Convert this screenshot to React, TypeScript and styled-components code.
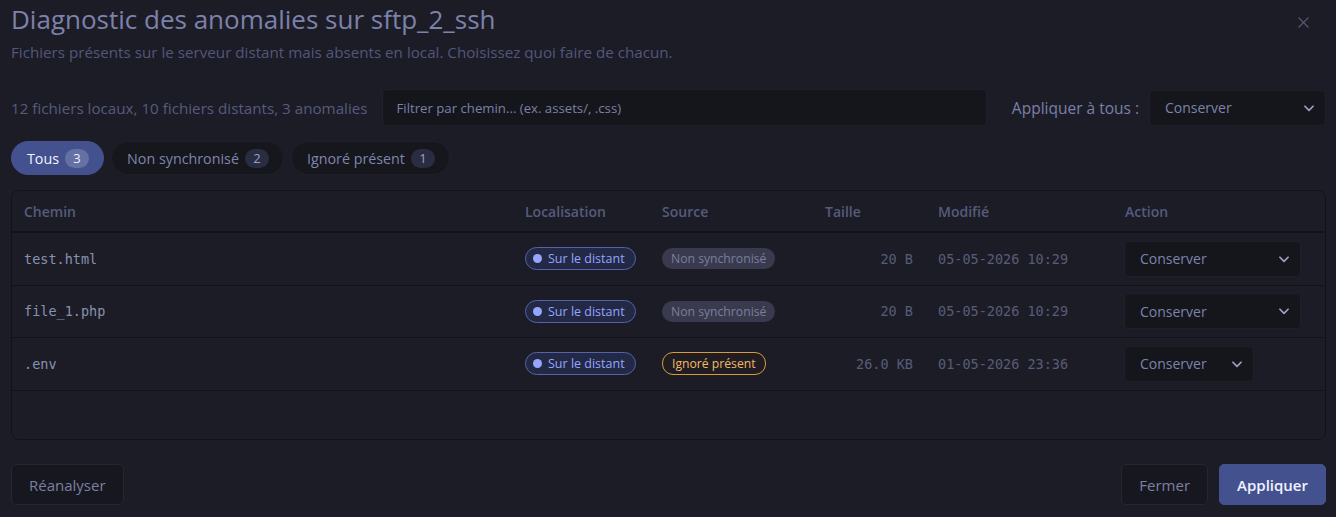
import React from "react";
import styled, { createGlobalStyle, css } from "styled-components";

const Global = createGlobalStyle`
  html, body { margin: 0; padding: 0; background: #1c1c26; }
  body { font-family: "Open Sans", "Noto Sans", sans-serif; color: #8a90b8; }
  * { box-sizing: border-box; }
`;

const Page = styled.div`
  width: 1336px;
  height: 517px;
  background: #1c1c26;
  padding: 0 10px 0 11px;
  display: flex;
  flex-direction: column;
  overflow: hidden;
`;

const Header = styled.div`
  display: flex;
  justify-content: space-between;
  align-items: flex-start;
  padding-top: 3px;
`;

const Title = styled.h1`
  margin: 0;
  font-size: 26px;
  font-weight: 500;
  line-height: 32px;
  color: #7c82ab;
`;

const Close = styled.button`
  background: none;
  border: none;
  padding: 0;
  margin: 13px 17px 0 0;
  width: 12px;
  height: 12px;
  display: flex;
  align-items: center;
  justify-content: center;
  cursor: pointer;
`;

const Subtitle = styled.p`
  margin: 7px 0 0;
  font-size: 15.2px;
  line-height: 20px;
  color: #52577a;
`;

const Toolbar = styled.div`
  display: flex;
  align-items: center;
  gap: 14px;
  margin-top: 27px;
  height: 37px;
`;

const Stats = styled.span`
  font-size: 15.2px;
  color: #565b7c;
  white-space: nowrap;
`;

const FilterInput = styled.div`
  flex: 1;
  height: 37px;
  background: #15151c;
  border: 1px solid #20202a;
  border-radius: 5px;
  display: flex;
  align-items: center;
  padding: 0 14px;
  font-size: 13.2px;
  color: #7a80a6;
  margin-right: 11px;
`;

const Label = styled.span`
  font-size: 15.5px;
  color: #7a80a6;
  white-space: nowrap;
  margin-right: -4px;
`;

const Select = styled.div<{ $w: number }>`
  width: ${(p) => p.$w}px;
  height: 36px;
  background: #15151c;
  border: 1px solid #20202a;
  border-radius: 5px;
  display: flex;
  align-items: center;
  justify-content: space-between;
  padding: 0 9px 0 15px;
  font-size: 14px;
  color: #7d83ab;
`;

const Tabs = styled.div`
  display: flex;
  gap: 7px;
  margin-top: 15px;
`;

const Tab = styled.div<{ $active?: boolean }>`
  height: 34px;
  border-radius: 17px;
  display: flex;
  align-items: center;
  gap: 6px;
  padding: 0 14px 0 15px;
  font-size: 14.3px;
  ${(p) =>
    p.$active
      ? css`
          background: #44518f;
          color: #f2f3ff;
          border: 1px solid #44518f;
        `
      : css`
          background: #16161d;
          color: #7f85ad;
          border: 1px solid #20202a;
        `}
`;

const Count = styled.span<{ $active?: boolean }>`
  min-width: 24px;
  height: 19px;
  padding: 0 7px;
  border-radius: 10px;
  font-size: 13px;
  display: flex;
  align-items: center;
  justify-content: center;
  background: ${(p) => (p.$active ? "rgba(255,255,255,0.18)" : "#2a2d42")};
  color: ${(p) => (p.$active ? "#eef0ff" : "#9aa0c4")};
`;

const Table = styled.div`
  margin-top: 15px;
  height: 250px;
  border: 1px solid #121219;
  border-radius: 8px;
  overflow: hidden;
  display: flex;
  flex-direction: column;
`;

const GRID = "501px 137px 163px 113px 187px 1fr";

const HeadRow = styled.div`
  display: grid;
  grid-template-columns: ${GRID};
  height: 42px;
  align-items: center;
  border-bottom: 2px solid #121219;
`;

const HeadCell = styled.div`
  padding-left: 12px;
  font-size: 14px;
  font-weight: 600;
  color: #565b7c;
`;

const Row = styled.div`
  display: grid;
  grid-template-columns: ${GRID};
  height: 52.5px;
  align-items: center;
  border-bottom: 1px solid #121219;
`;

const Cell = styled.div<{ $right?: boolean }>`
  padding-left: 12px;
  display: flex;
  align-items: center;
  ${(p) =>
    p.$right &&
    css`
      justify-content: flex-end;
      padding-right: 13px;
    `}
`;

const ActionCell = styled.div`
  padding-left: 11px;
  display: flex;
  align-items: center;
`;

const Mono = styled.span<{ $dim?: boolean }>`
  font-family: "DejaVu Sans Mono", "Liberation Mono", monospace;
  font-size: 13.5px;
  color: ${(p) => (p.$dim ? "#575c78" : "#8a90b0")};
  white-space: nowrap;
`;

const LocBadge = styled.span`
  height: 23px;
  border-radius: 12px;
  border: 1px solid #5463ad;
  background: #232845;
  color: #94a6ff;
  font-size: 12.5px;
  display: inline-flex;
  align-items: center;
  gap: 6px;
  padding: 0 10px 0 7px;
  &::before {
    content: "";
    width: 9px;
    height: 9px;
    border-radius: 50%;
    background: #94a6ff;
  }
`;

const SourceBadge = styled.span<{ $kind: "sync" | "ignored" }>`
  height: 21px;
  border-radius: 11px;
  font-size: 12.2px;
  display: inline-flex;
  align-items: center;
  padding: 0 9px;
  ${(p) =>
    p.$kind === "sync"
      ? css`
          background: #393a4e;
          color: #7a7f9c;
        `
      : css`
          border: 1px solid #d99a3c;
          color: #f2b866;
          background: #1f1d22;
          height: 23px;
          padding: 0 9px;
        `}
`;

const Footer = styled.div`
  margin-top: auto;
  margin-bottom: 12px;
  display: flex;
  align-items: center;
`;

const Spacer = styled.div`
  flex: 1;
`;

const Button = styled.button<{ $primary?: boolean }>`
  height: 41px;
  border-radius: 5px;
  font-family: inherit;
  font-size: 15px;
  padding: 0 17px;
  cursor: pointer;
  ${(p) =>
    p.$primary
      ? css`
          background: #44518f;
          border: 1px solid #44518f;
          color: #f0f2ff;
          font-weight: 600;
          margin-left: 11px;
        `
      : css`
          background: #17171f;
          border: 1px solid #262631;
          color: #7a80a2;
        `}
`;

const Chevron = () => (
  <svg width="14" height="14" viewBox="0 0 24 24" fill="none" stroke="#9aa0c0" strokeWidth="3" strokeLinecap="round" strokeLinejoin="round">
    <path d="M5 9l7 7 7-7" />
  </svg>
);

type Item = {
  path: string;
  source: "sync" | "ignored";
  size: string;
  date: string;
  selW: number;
};

const items: Item[] = [
  { path: "test.html", source: "sync", size: "20 B", date: "05-05-2026 10:29", selW: 177 },
  { path: "file_1.php", source: "sync", size: "20 B", date: "05-05-2026 10:29", selW: 177 },
  { path: ".env", source: "ignored", size: "26.0 KB", date: "01-05-2026 23:36", selW: 130 },
];

export default function App() {
  return (
    <>
      <Global />
      <Page>
        <Header>
          <Title>Diagnostic des anomalies sur sftp_2_ssh</Title>
          <Close aria-label="Fermer">
            <svg width="11" height="11" viewBox="0 0 12 12" stroke="#5a5f7e" strokeWidth="1.3" strokeLinecap="round">
              <path d="M1 1l10 10M11 1L1 11" />
            </svg>
          </Close>
        </Header>
        <Subtitle>
          Fichiers présents sur le serveur distant mais absents en local. Choisissez quoi faire de chacun.
        </Subtitle>
        <Toolbar>
          <Stats>12 fichiers locaux, 10 fichiers distants, 3 anomalies</Stats>
          <FilterInput>Filtrer par chemin... (ex. assets/, .css)</FilterInput>
          <Label>Appliquer à tous :</Label>
          <Select $w={177}>
            Conserver
            <Chevron />
          </Select>
        </Toolbar>
        <Tabs>
          <Tab $active>
            Tous <Count $active>3</Count>
          </Tab>
          <Tab>
            Non synchronisé <Count>2</Count>
          </Tab>
          <Tab>
            Ignoré présent <Count>1</Count>
          </Tab>
        </Tabs>
        <Table>
          <HeadRow>
            <HeadCell>Chemin</HeadCell>
            <HeadCell>Localisation</HeadCell>
            <HeadCell>Source</HeadCell>
            <HeadCell>Taille</HeadCell>
            <HeadCell>Modifié</HeadCell>
            <HeadCell>Action</HeadCell>
          </HeadRow>
          {items.map((it) => (
            <Row key={it.path}>
              <Cell>
                <Mono>{it.path}</Mono>
              </Cell>
              <Cell>
                <LocBadge>Sur le distant</LocBadge>
              </Cell>
              <Cell>
                <SourceBadge $kind={it.source}>
                  {it.source === "sync" ? "Non synchronisé" : "Ignoré présent"}
                </SourceBadge>
              </Cell>
              <Cell $right>
                <Mono $dim>{it.size}</Mono>
              </Cell>
              <Cell>
                <Mono $dim>{it.date}</Mono>
              </Cell>
              <ActionCell>
                <Select $w={it.selW}>
                  Conserver
                  <Chevron />
                </Select>
              </ActionCell>
            </Row>
          ))}
        </Table>
        <Footer>
          <Button>Réanalyser</Button>
          <Spacer />
          <Button>Fermer</Button>
          <Button $primary>Appliquer</Button>
        </Footer>
      </Page>
    </>
  );
}
